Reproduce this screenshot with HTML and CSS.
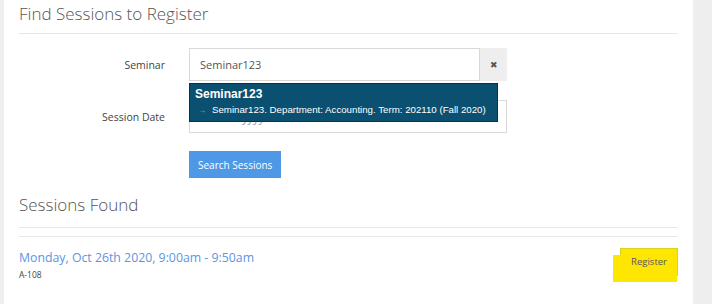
FILE: index.html
```html
<!DOCTYPE html>
<html lang="en">
<head>
  <meta charset="UTF-8">
  <meta name="viewport" content="width=device-width, initial-scale=1.0">
  <title>Find Sessions</title>
  <link rel="stylesheet" href="styles.css">
</head>
<body>

<div class="page">
  <h3 class="section-title">Find Sessions to Register</h3>

  <form class="search-form">
    <div class="form-row">
      <label for="seminar">Seminar</label>
      <div class="input-group">
        <input type="text" id="seminar" value="Seminar123">
        <span class="clear-btn">&#10006;</span>
        <ul class="autocomplete">
          <li class="ac-title">Seminar123</li>
          <li class="ac-item"><span class="ac-arrow">&#8594;</span>Seminar123. Department: Accounting. Term: 202110 (Fall 2020)</li>
        </ul>
      </div>
    </div>

    <div class="form-row">
      <label for="sessionDate">Session Date</label>
      <input type="text" id="sessionDate" class="wide" placeholder="mm/dd/yyyy">
    </div>

    <div class="form-row">
      <span></span>
      <button type="button" class="btn-search">Search Sessions</button>
    </div>
  </form>

  <h3 class="section-title found">Sessions Found</h3>

  <div class="session">
    <div class="session-info">
      <a href="#" class="session-link">Monday, Oct 26th 2020, 9:00am - 9:50am</a>
      <div class="room">A-108</div>
    </div>
    <span class="register">Register</span>
  </div>
</div>

</body>
</html>
```

FILE: styles.css
```css
body {
  font-family: 'Open Sans', sans-serif;
  background-color: #eeeeee;
  margin: 0;
  padding: 0 19px 0 4px;
  height: 304px;
  overflow: hidden;
}

.page {
  background-color: #fff;
  height: 100%;
  padding: 0 15px;
}

.section-title {
  font-size: 17px;
  font-weight: 300;
  color: #555;
  margin: 0;
  padding-top: 2px;
  height: 31px;
  border-bottom: 1px solid #e8e8e8;
}

.search-form {
  padding-top: 14px;
}

.form-row {
  display: grid;
  grid-template-columns: 170px 318px;
  align-items: center;
  margin-bottom: 19px;
}

.form-row label {
  text-align: right;
  padding-right: 24px;
  font-size: 10.5px;
  color: #444;
}

.input-group {
  display: flex;
  position: relative;
}

input {
  font-family: 'Open Sans', sans-serif;
  font-size: 11px;
  color: #555;
  height: 33px;
  box-sizing: border-box;
  border: 1px solid #d9d9d9;
  padding: 0 10px;
  width: 291px;
  margin: 0;
  outline: none;
}

input.wide {
  width: 318px;
  padding-top: 2px;
}

input::placeholder {
  color: #999;
}

.clear-btn {
  width: 27px;
  height: 33px;
  background-color: #eee;
  display: flex;
  align-items: center;
  justify-content: center;
  font-size: 9px;
  color: #555;
}

.autocomplete {
  position: absolute;
  top: 35px;
  left: 0;
  width: 309px;
  box-sizing: border-box;
  margin: 0;
  padding: 3px 5px 3px 5px;
  list-style: none;
  background-color: #0c5071;
  border: 1px solid #0d2b6c;
  font-family: 'Liberation Sans', Arial, sans-serif;
  color: #fff;
  white-space: nowrap;
  z-index: 2;
}

.ac-title {
  font-size: 12px;
  font-weight: bold;
  line-height: 15px;
}

.ac-item {
  font-size: 9.7px;
  line-height: 15px;
}

.ac-arrow {
  font-size: 8px;
  color: #9ab;
  margin: 0 6px 0 3px;
}

.btn-search {
  justify-self: start;
  background-color: #4f98e6;
  color: #fff;
  border: none;
  font-family: 'Open Sans', sans-serif;
  font-size: 10px;
  height: 27px;
  padding: 0 9px;
  margin-top: -1px;
  cursor: pointer;
}

.found {
  margin-top: -6px;
  padding-top: 2px;
  height: 34px;
}

.session {
  display: flex;
  justify-content: space-between;
  align-items: flex-start;
  border-top: 1px solid #e8e8e8;
  margin-top: 8px;
  padding-top: 8px;
}

.session-link {
  color: #5d94e3;
  font-size: 12.3px;
  text-decoration: none;
}

.room {
  font-size: 8.5px;
  color: #444;
  margin-top: 2px;
}

.register {
  position: relative;
  margin-top: 3px;
  font-size: 9.5px;
  color: #556;
  background-color: #ffe600;
  border: 1px solid #d9d21e;
  padding: 6px 10px 7px 10px;
  z-index: 0;
}

.register::before {
  content: '';
  position: absolute;
  left: -8px;
  top: 6px;
  right: 0;
  bottom: -7px;
  background-color: #ffe600;
  z-index: -1;
}
```
